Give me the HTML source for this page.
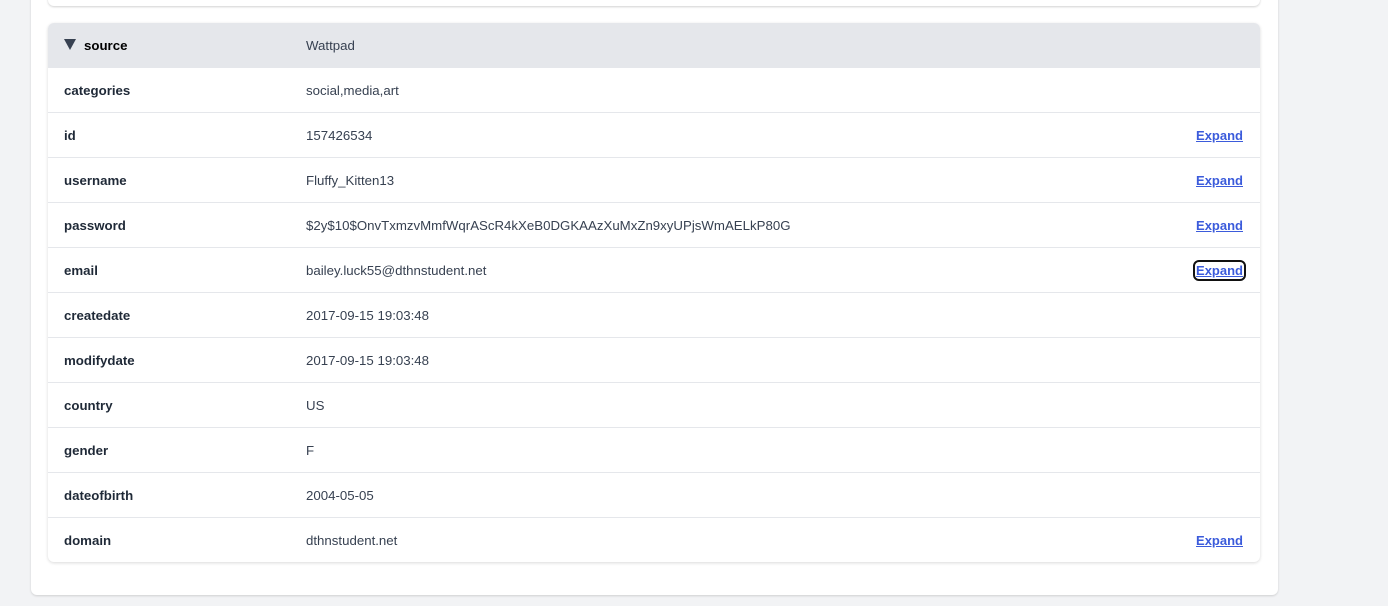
<!DOCTYPE html>
<html><head><style>
body{margin:0;width:1388px;height:606px;background:#f2f3f5;font-family:"Liberation Sans",sans-serif;position:relative;overflow:hidden}
.outer{position:absolute;left:31px;top:-10px;width:1247px;height:605px;background:#fff;border-radius:6px;box-shadow:0 1px 2px rgba(0,0,0,.15)}
.topc{position:absolute;left:48px;top:-10px;width:1212px;height:16px;background:#fff;border-radius:6px;box-shadow:0 1px 2px rgba(0,0,0,.18)}
.tbl{position:absolute;left:48px;top:23px;width:1212px;height:539px;background:#fff;border-radius:6px;box-shadow:0 1px 3px rgba(0,0,0,.15);overflow:hidden}
.row{height:45px;border-bottom:1px solid #e5e7eb;position:relative;font-size:13.25px;color:#374151;box-sizing:border-box}
.row:last-child{border-bottom:none}
.row.h{background:#e5e7eb;border-bottom:none}
.k{position:absolute;left:16px;top:15px;font-weight:bold;color:#1f2937}
.v{position:absolute;left:258px;top:15px}
.e{position:absolute;right:17px;top:15px;color:#3b5bdb;text-decoration:underline;font-size:13px;font-weight:bold}
.f{outline:2px solid #111;border-radius:3px;outline-offset:1px}
.tri{position:absolute;left:16px;top:16px;width:0;height:0;border-left:6px solid transparent;border-right:6px solid transparent;border-top:11px solid #374151}
</style></head><body>
<div class="outer"></div>
<div class="topc"></div>
<div class="tbl">
<div class="row h"><span class="tri"></span><span class="k" style="color:#000;left:36px">source</span><span class="v">Wattpad</span></div>
<div class="row"><span class="k">categories</span><span class="v">social,media,art</span></div>
<div class="row"><span class="k">id</span><span class="v">157426534</span><span class="e">Expand</span></div>
<div class="row"><span class="k">username</span><span class="v">Fluffy_Kitten13</span><span class="e">Expand</span></div>
<div class="row"><span class="k">password</span><span class="v">$2y$10$OnvTxmzvMmfWqrAScR4kXeB0DGKAAzXuMxZn9xyUPjsWmAELkP80G</span><span class="e">Expand</span></div>
<div class="row"><span class="k">email</span><span class="v">bailey.luck55@dthnstudent.net</span><span class="e f">Expand</span></div>
<div class="row"><span class="k">createdate</span><span class="v">2017-09-15 19:03:48</span></div>
<div class="row"><span class="k">modifydate</span><span class="v">2017-09-15 19:03:48</span></div>
<div class="row"><span class="k">country</span><span class="v">US</span></div>
<div class="row"><span class="k">gender</span><span class="v">F</span></div>
<div class="row"><span class="k">dateofbirth</span><span class="v">2004-05-05</span></div>
<div class="row"><span class="k">domain</span><span class="v">dthnstudent.net</span><span class="e">Expand</span></div>
</div>
</body></html>
